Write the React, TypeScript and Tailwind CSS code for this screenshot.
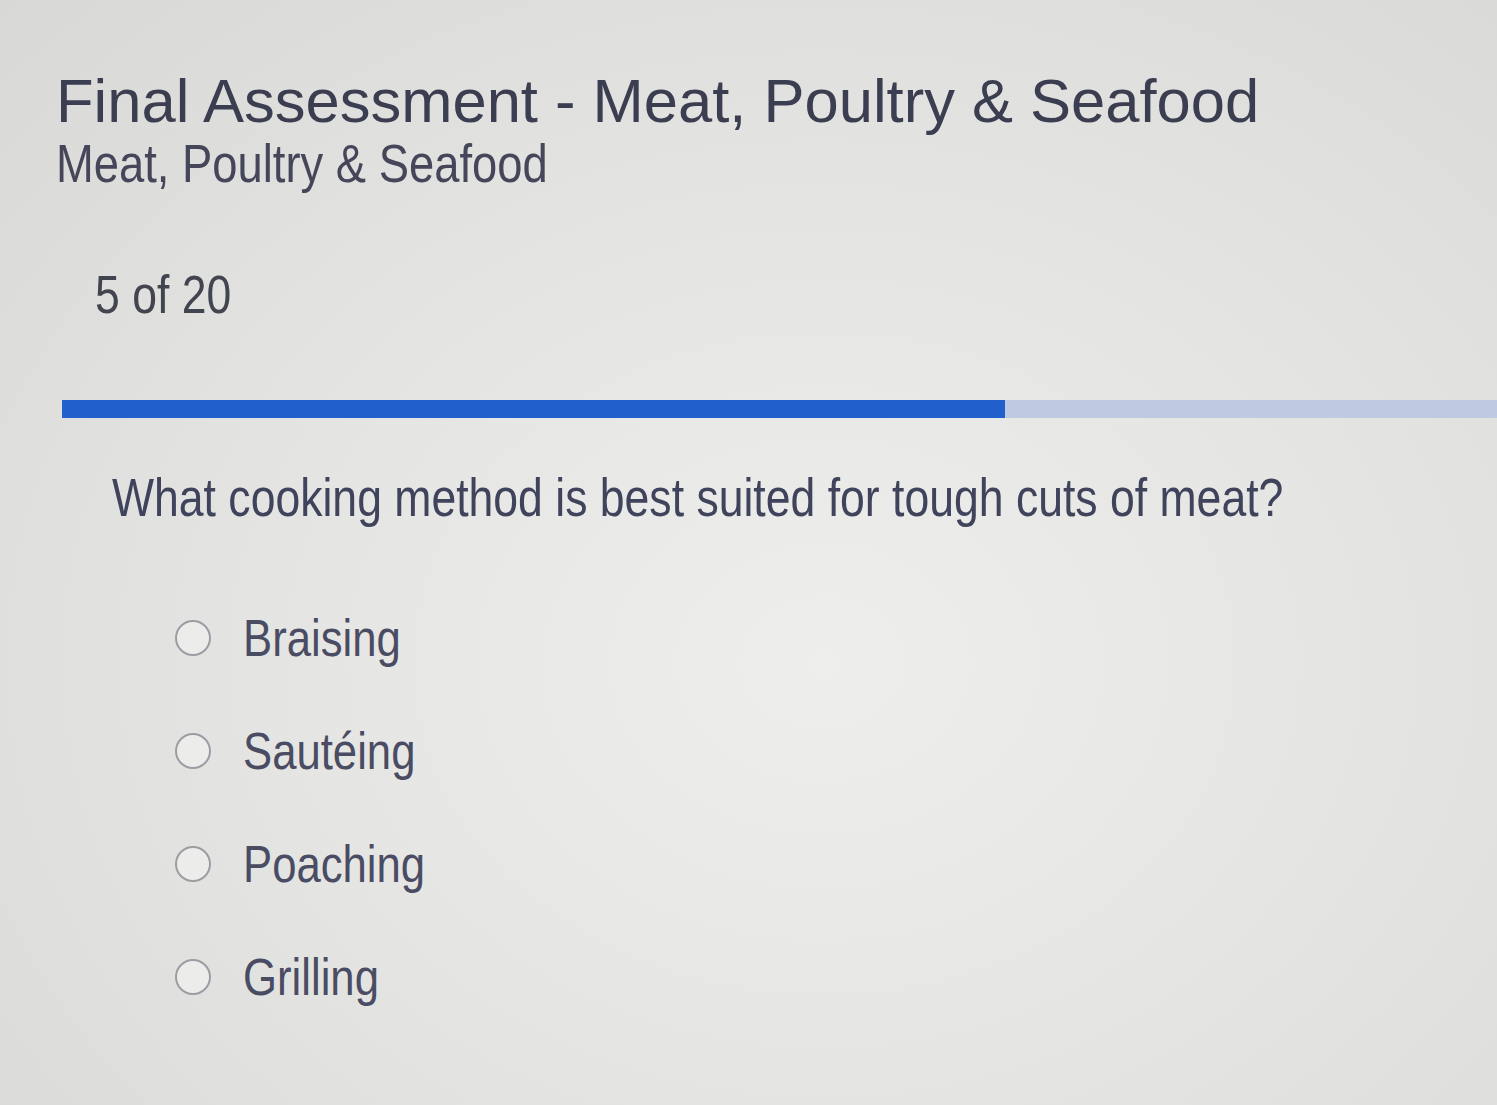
const OPTIONS = ["Braising", "Sautéing", "Poaching", "Grilling"];

// The page text uses a narrow grotesque; no condensed face is installed, so squeeze Liberation Sans.
const narrow =
  "inline-block origin-left scale-x-[0.84] whitespace-nowrap font-['Liberation_Sans',Arial,sans-serif]";

function Radio() {
  return (
    <span className="w-[36px] h-[36px] rounded-full border-[2.5px] border-[#9c9da3] bg-[#ecedeb] flex-shrink-0" />
  );
}

export default function App() {
  return (
    <div className="min-h-[1105px] w-full overflow-hidden bg-[radial-gradient(ellipse_at_55%_60%,#eeeeec_0%,#e5e6e3_45%,#d8d9d6_100%)] text-[#444657]">
      {/* Heading */}
      <div className="pl-[56px] pt-[66px]">
        <h1 className="font-['Liberation_Sans',Arial,sans-serif] text-[61.5px] leading-[70px] text-[#3b3d50]">
          Final Assessment - Meat, Poultry &amp; Seafood
        </h1>
        <p className="leading-[60px] -mt-[3px]">
          <span className={`${narrow} text-[54px] text-[#45465a]`}>Meat, Poultry &amp; Seafood</span>
        </p>
      </div>

      {/* Progress */}
      <div className="pl-[95px] pt-[59px] leading-[60px]">
        <span className={`${narrow} text-[53px] text-[#42444f]`}>5 of 20</span>
      </div>
      <div className="ml-[62px] mt-[63px] h-[18px] bg-[#bfc9df] flex">
        <div className="w-[943px] h-full bg-[#2160cc]" />
      </div>

      {/* Question */}
      <div className="pl-[112px] pt-[49px] leading-[60px]">
        <span className={`${narrow} scale-x-[0.825] text-[54px] text-[#40435c]`}>
          What cooking method is best suited for tough cuts of meat?
        </span>
      </div>

      <div className="pl-[175px] pt-[68px] flex flex-col gap-[53px]">
        {OPTIONS.map((opt) => (
          <label key={opt} className="flex items-center gap-[32px] leading-[60px]">
            <Radio />
            <span className={`${narrow} text-[52px] text-[#4a4c63]`}>{opt}</span>
          </label>
        ))}
      </div>
    </div>
  );
}
